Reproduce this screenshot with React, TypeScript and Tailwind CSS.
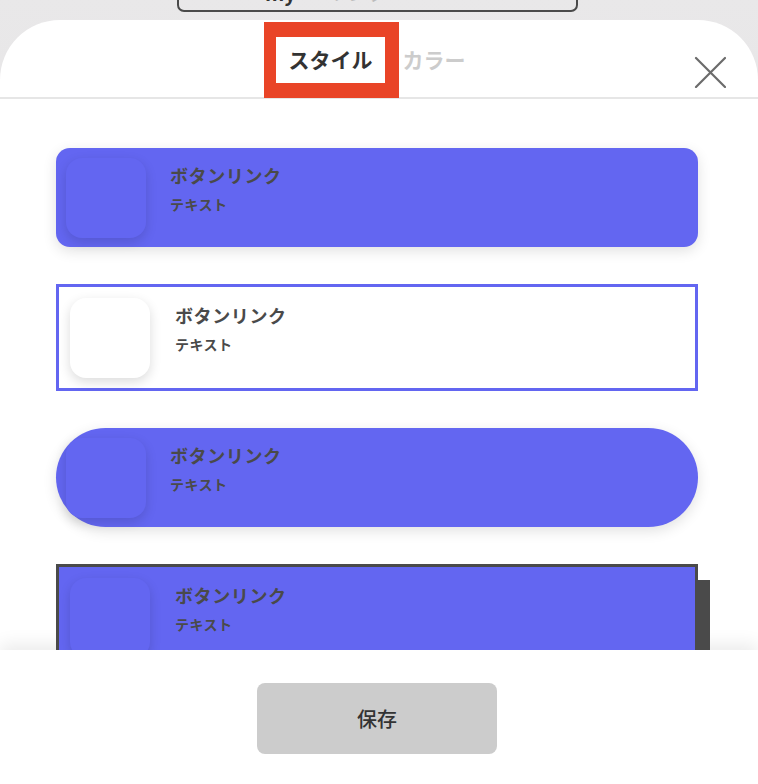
import React from "react";

const jp = { fontFamily: '"Noto Sans CJK JP", "Noto Sans", sans-serif' };

type Variant = "fill" | "outline" | "pill" | "hard";

function StyleCard({ variant }: { variant: Variant }) {
  const outer =
    variant === "fill"
      ? "rounded-[14px] bg-[#6366f1] p-[10px] pb-[9px] shadow-[0_4px_14px_rgba(0,0,0,0.12)]"
      : variant === "outline"
      ? "border-[3px] border-[#6366f1] bg-white px-[11px] pt-[11px] pb-[10px]"
      : variant === "pill"
      ? "rounded-full bg-[#6366f1] p-[10px] pb-[9px] shadow-[0_4px_14px_rgba(0,0,0,0.12)]"
      : "border-[3px] border-[#4a4a4a] bg-[#6366f1] px-[11px] pt-[11px] pb-[10px] shadow-[12px_16px_0_#4a4a4a]";
  const thumb = variant === "outline" ? "bg-white" : "bg-[#6366f1]";
  const textGap = variant === "outline" || variant === "hard" ? "gap-[25px]" : "gap-6";

  return (
    <div className={`flex shrink-0 ${textGap} ${outer}`}>
      <div className={`h-20 w-20 shrink-0 rounded-2xl shadow-[0_4px_12px_rgba(0,0,0,0.14)] ${thumb}`} />
      <div className="mt-[4px] flex flex-col gap-[6px] text-[#4a4a4a]">
        <span className="text-[18px] font-bold leading-[26px] tracking-[0.6px]">ボタンリンク</span>
        <span className="text-[14px] font-bold leading-[20px] tracking-[0.5px]">テキスト</span>
      </div>
    </div>
  );
}

export default function App() {
  return (
    <div className="flex h-[784px] w-[758px] flex-col overflow-hidden bg-gradient-to-b from-[#e9e8e9] to-[#dedcde]" style={jp}>
      {/* page behind the sheet */}
      <div className="ml-[177px] -mt-[22px] flex h-[34px] w-[401px] items-end overflow-hidden rounded-b-[7px] border-2 border-[#4a4a4a] pl-[86px]">
        <span className="mb-[2px] text-[20px] leading-[30px] font-bold text-[#333]">my</span>
        <span className="mb-[2px] ml-8 text-[20px] leading-[30px] text-[#bbb]">リンク</span>
      </div>

      <div className="mt-[8px] flex flex-1 flex-col overflow-hidden rounded-t-[60px] bg-white">
        <div className="relative flex h-[79px] shrink-0 items-center justify-center gap-[30px] border-b-2 border-[#e6e6e6] pr-[4px]">
          <div className="relative">
            <span className="relative z-10 block text-[21px] font-bold leading-[30px] text-[#333]">スタイル</span>
            <div className="absolute -left-[25px] -right-[26px] -top-[22px] -bottom-[24px] z-20 border-y-[15px] border-l-[12px] border-r-[14px] border-[#e94427]" />
          </div>
          <span className="block text-[21px] font-bold leading-[30px] text-[#cccccc]">カラー</span>
          <button className="absolute right-[32px] top-[36px] h-8 w-8">
            <svg viewBox="0 0 32 32" className="h-8 w-8" fill="none" stroke="#6b6b6b" strokeWidth="2.2" strokeLinecap="round">
              <path d="M2 2 L31 31 M31 2 L2 31" />
            </svg>
          </button>
        </div>

        <div className="relative z-10 flex flex-1 flex-col gap-[37px] overflow-hidden pl-[56px] pr-[60px] pt-[49px]">
          <StyleCard variant="fill" />
          <StyleCard variant="outline" />
          <StyleCard variant="pill" />
          <StyleCard variant="hard" />
        </div>

        <div className="flex h-[134px] shrink-0 items-center justify-center bg-white pr-[4px] shadow-[0_-6px_16px_rgba(0,0,0,0.08)]">
          <button className="mt-[3px] h-[71px] w-[240px] rounded-lg bg-[#cccccc] text-[20px] font-medium text-[#333]">
            保存
          </button>
        </div>
      </div>
    </div>
  );
}
